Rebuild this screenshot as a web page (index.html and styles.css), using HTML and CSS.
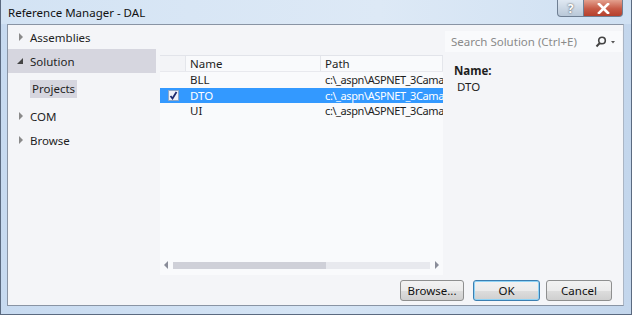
FILE: index.html
```html
<!DOCTYPE html>
<html lang="en">
<head>
  <meta charset="UTF-8">
  <title>Reference Manager - DAL</title>
  <link rel="stylesheet" href="styles.css">
</head>
<body>
  <div class="window">
    <div class="titlebar">
      <span class="title">Reference Manager - DAL</span>
      <div class="caption-btns">
        <span class="cbtn help">?</span>
        <span class="cbtn close">
          <svg width="13" height="11" viewBox="0 0 13 11"><path d="M2 1 L11 10 M11 1 L2 10" stroke="#fff" stroke-width="2.6" stroke-linecap="square"/></svg>
        </span>
      </div>
    </div>
    <div class="frame">
      <div class="client">
        <div class="top">
          <div class="aside">
            <div class="cat"><span class="tri closed"></span>Assemblies</div>
            <div class="cat active"><span class="tri open"></span>Solution</div>
            <div class="sub"><span class="sub-item">Projects</span></div>
            <div class="cat"><span class="tri closed"></span>COM</div>
            <div class="cat"><span class="tri closed"></span>Browse</div>
          </div>
          <div class="main">
            <div class="list">
              <div class="row head">
                <span class="c-chk"></span>
                <span class="c-name">Name</span>
                <span class="c-path">Path</span>
              </div>
              <div class="row">
                <span class="c-chk"></span>
                <span class="c-name">BLL</span>
                <span class="c-path">c:\_aspn\ASPNET_3Cama</span>
              </div>
              <div class="row sel">
                <span class="c-chk"><span class="box">
                  <svg width="9" height="9" viewBox="0 0 9 9"><path d="M1.5 5 L3.5 7.5 L7.5 1" fill="none" stroke="#1c2a6e" stroke-width="1.8"/></svg>
                </span></span>
                <span class="c-name">DTO</span>
                <span class="c-path">c:\_aspn\ASPNET_3Cama</span>
              </div>
              <div class="row">
                <span class="c-chk"></span>
                <span class="c-name">UI</span>
                <span class="c-path">c:\_aspn\ASPNET_3Cama</span>
              </div>
              <div class="hscroll">
                <span class="arr left"></span>
                <span class="track"><span class="thumb"></span></span>
                <span class="arr right"></span>
              </div>
            </div>
          </div>
          <div class="details">
            <div class="search">
              <span class="ph">Search Solution (Ctrl+E)</span>
              <svg width="24" height="12" viewBox="0 0 24 12"><circle cx="7" cy="4.5" r="3.3" fill="none" stroke="#444" stroke-width="1.6"/><path d="M4.8 7 L1.5 10.5" stroke="#444" stroke-width="2"/><path d="M16 5 L20 5 L18 7.5 Z" fill="#555"/></svg>
            </div>
            <div class="prop-label">Name:</div>
            <div class="prop-value">DTO</div>
          </div>
        </div>
        <div class="buttons">
          <span class="btn browse">Browse...</span>
          <span class="btn default">OK</span>
          <span class="btn cancel">Cancel</span>
        </div>
      </div>
    </div>
  </div>
</body>
</html>
```

FILE: styles.css
```css
* {
  margin: 0;
  padding: 0;
  box-sizing: border-box;
}

html,
body {
  width: 632px;
  height: 315px;
  overflow: hidden;
}

body {
  font-family: "Segoe UI", "Noto Sans", "Liberation Sans", sans-serif;
  font-size: 11.5px;
  color: #1e1e1e;
}

.window {
  width: 632px;
  height: 315px;
  display: flex;
  flex-direction: column;
  background: linear-gradient(90deg, #c7daf0 0%, #d6e5f5 50%, #c3d6ec 100%);
  border: 1px solid #5b6a80;
  border-top: none;
}

.titlebar {
  height: 24px;
  display: flex;
  align-items: flex-start;
  justify-content: space-between;
  background: linear-gradient(90deg, #d3e3f4 0%, #dde9f6 60%, #cfe0f2 100%);
}

.title {
  padding: 5px 0 0 7px;
  color: #111;
}

.caption-btns {
  display: flex;
  margin-right: 8px;
}

.cbtn {
  height: 17px;
  display: flex;
  align-items: center;
  justify-content: center;
  border: 1px solid #6f7f93;
  border-top: none;
}

.cbtn.help {
  width: 27px;
  border-radius: 0 0 0 4px;
  background: linear-gradient(#dfe8f2, #b9c8d8);
  color: #fff;
  font-weight: bold;
  font-size: 12px;
  text-shadow: 0 0 2px #333;
}

.cbtn.close {
  width: 39px;
  border-left: none;
  border-radius: 0 0 4px 0;
  background: linear-gradient(#e3a08e, #c75a46 55%, #b5402c);
}

.frame {
  flex: 1;
  padding: 0 7px 8px 6px;
}

.client {
  height: 100%;
  display: flex;
  flex-direction: column;
  background: #f4f5f8;
  border: 1px solid #8994a4;
  border-right-color: #aab5c4;
}

.top {
  flex: 1;
  display: grid;
  grid-template-columns: 148px 289px 1fr;
}

.cat {
  height: 24px;
  display: flex;
  align-items: center;
  padding-left: 9px;
}

.cat.active {
  background: #d6d6df;
}

.tri {
  display: inline-block;
  width: 0;
  height: 0;
}

.tri.closed {
  border-left: 4px solid #8a8a8a;
  border-top: 4px solid transparent;
  border-bottom: 4px solid transparent;
  margin-left: 2px;
  margin-right: 7px;
}

.tri.open {
  border-right: 6px solid #444;
  border-top: 6px solid transparent;
  margin-left: 0;
  margin-right: 7px;
}

.sub {
  height: 31px;
  display: flex;
  align-items: center;
  padding-left: 22px;
}

.sub-item {
  background: #d6d6df;
  padding: 1px 2px 2px;
}

.main {
  padding: 30px 2px 0 4px;
}

.list {
  height: 220px;
  background: #f9fafc;
  display: flex;
  flex-direction: column;
}

.row {
  height: 15.5px;
  display: grid;
  grid-template-columns: 26px 135px 1fr;
  align-items: center;
  white-space: nowrap;
  overflow: hidden;
}

.row span {
  overflow: hidden;
}

.row.head {
  height: 17px;
  border-top: 1px solid #e2e4ea;
  border-bottom: 1px solid #e8e9ee;
}

.row.head span {
  height: 100%;
  display: flex;
  align-items: center;
  border-right: 1px solid #e4e6eb;
}

.row.head .c-chk {
  background: #f3f4f7;
}

.row .c-name,
.row .c-path {
  padding-left: 4px;
}

.row .c-path {
  font-size: 11px;
  letter-spacing: -0.4px;
}

.row.head .c-path {
  font-size: 11.5px;
  letter-spacing: 0;
}

.row.sel {
  background: #3399ff;
  color: #fff;
}

.c-chk {
  display: flex;
  align-items: center;
  justify-content: center;
}

.box {
  width: 11px;
  height: 11px;
  background: #eef2fa;
  border: 1px solid #8fa8c8;
  display: flex;
  align-items: center;
  justify-content: center;
}

.hscroll {
  margin-top: auto;
  margin-bottom: 5px;
  height: 10px;
  display: flex;
  align-items: center;
  padding: 0 4px;
}

.arr {
  width: 0;
  height: 0;
  border-top: 4px solid transparent;
  border-bottom: 4px solid transparent;
}

.arr.left {
  border-right: 4px solid #8a8d99;
}

.arr.right {
  border-left: 4px solid #8a8d99;
}

.track {
  flex: 1;
  height: 7px;
  margin: 0 5px;
  background: #e8e9ee;
  display: flex;
}

.thumb {
  width: 153px;
  background: #cfd0d8;
}

.details {
  padding-top: 6px;
}

.search {
  height: 21px;
  margin-right: 1px;
  background: #f9fafc;
  display: flex;
  align-items: center;
  justify-content: space-between;
  padding: 0 3px 0 6px;
  color: #8a8a8a;
}

.prop-label {
  margin: 11px 0 0 9px;
  font-weight: bold;
  line-height: 16px;
}

.prop-value {
  margin-left: 12px;
  line-height: 16px;
}

.buttons {
  display: flex;
  justify-content: flex-end;
  padding: 0 11px 4px 0;
}

.btn {
  width: 67px;
  height: 21px;
  display: flex;
  align-items: center;
  justify-content: center;
  border: 1px solid #8e8f8f;
  border-radius: 3px;
  background: linear-gradient(#f2f2f2 0%, #ebebeb 50%, #dddddd 51%, #cfcfcf 100%);
  color: #111;
}

.btn.browse {
  width: 64px;
  margin-right: 9px;
}

.btn.cancel {
  width: 66px;
  margin-left: 6px;
}

.btn.default {
  border-color: #3c7fb1;
  box-shadow: inset 0 0 0 1px #8fd3f6;
}
```
